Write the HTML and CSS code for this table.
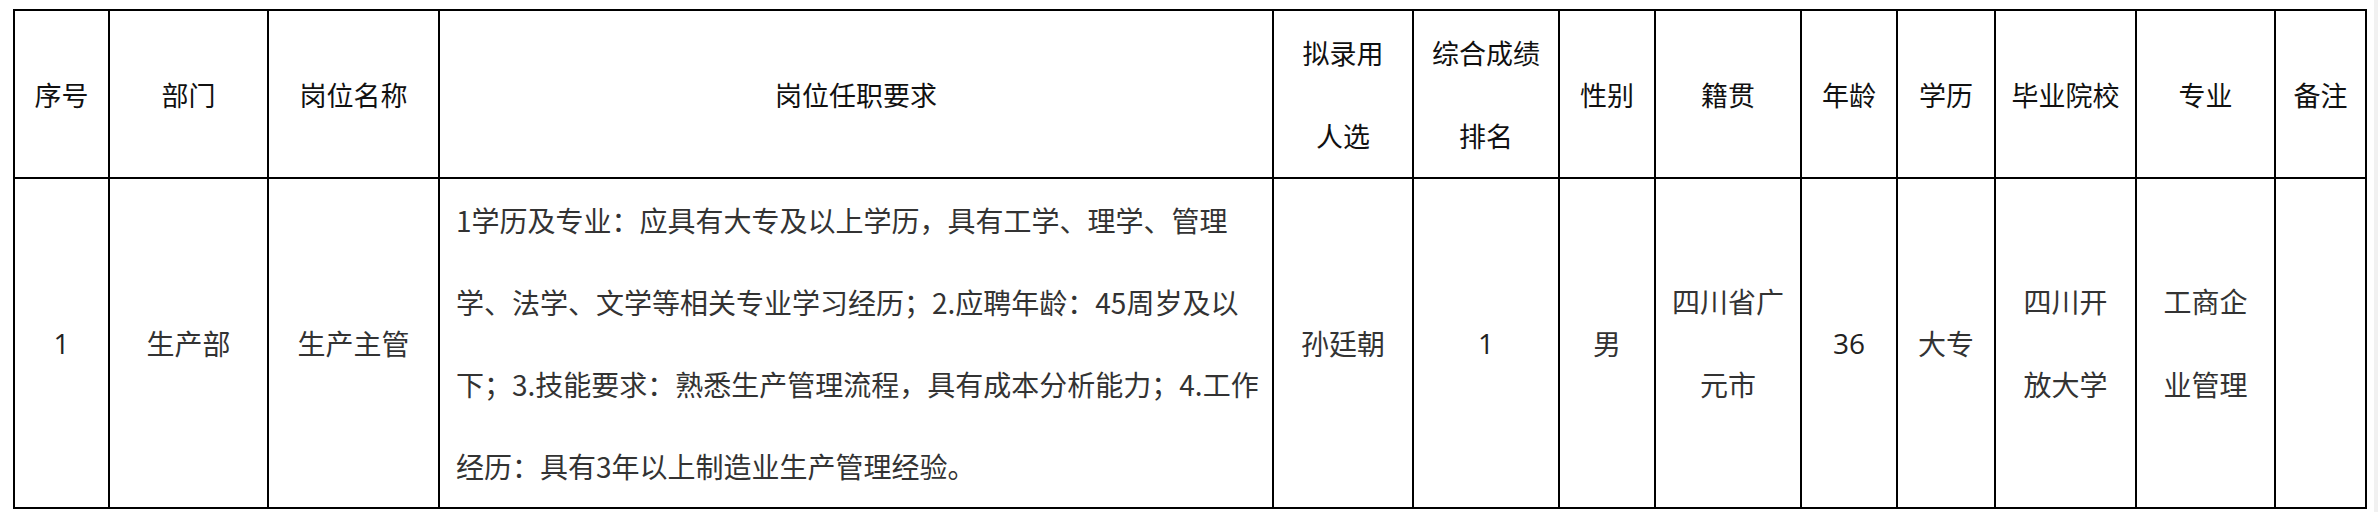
FILE: index.html
```html
<!DOCTYPE html>
<html lang="zh-CN">
<head>
<meta charset="utf-8">
<title>拟录用人员公示</title>
<link rel="stylesheet" href="styles.css">
</head>
<body>
<div class="page">
  <main class="content">
    <table class="roster">
      <colgroup>
        <col class="c-no">
        <col class="c-dept">
        <col class="c-post">
        <col class="c-req">
        <col class="c-name">
        <col class="c-rank">
        <col class="c-sex">
        <col class="c-origin">
        <col class="c-age">
        <col class="c-edu">
        <col class="c-school">
        <col class="c-major">
        <col class="c-note">
      </colgroup>
      <thead>
        <tr class="head-row">
          <th>序号</th>
          <th>部门</th>
          <th>岗位名称</th>
          <th>岗位任职要求</th>
          <th>拟录用<br>人选</th>
          <th>综合成绩<br>排名</th>
          <th>性别</th>
          <th>籍贯</th>
          <th>年龄</th>
          <th>学历</th>
          <th>毕业院校</th>
          <th>专业</th>
          <th>备注</th>
        </tr>
      </thead>
      <tbody>
        <tr class="body-row">
          <td class="num">1</td>
          <td>生产部</td>
          <td>生产主管</td>
          <td class="req">1学历及专业：应具有大专及以上学历，具有工学、理学、管理<br>学、法学、文学等相关专业学习经历；2.应聘年龄：45周岁及以<br>下；3.技能要求：熟悉生产管理流程，具有成本分析能力；4.工作<br>经历：具有3年以上制造业生产管理经验。</td>
          <td>孙廷朝</td>
          <td class="num">1</td>
          <td>男</td>
          <td>四川省广<br>元市</td>
          <td class="num">36</td>
          <td>大专</td>
          <td>四川开<br>放大学</td>
          <td>工商企<br>业管理</td>
          <td></td>
        </tr>
      </tbody>
    </table>
  </main>
  <aside class="scroll-track"></aside>
</div>
</body>
</html>
```

FILE: styles.css
```css
html, body {
  margin: 0;
  padding: 0;
  background: #ffffff;
}

.page {
  display: flex;
  min-height: 512px;
}

.content {
  flex: 1;
  padding: 9px 0 0 13px;
}

.scroll-track {
  width: 4px;
  background: #f1f1f1;
}

.roster {
  border-collapse: separate;
  border-spacing: 0;
  table-layout: fixed;
  width: 2354px;
  border-top: 2px solid #000;
  border-left: 2px solid #000;
  font-family: "Noto Sans CJK SC", "Noto Sans", sans-serif;
}

.roster th,
.roster td {
  border-right: 2px solid #000;
  border-bottom: 2px solid #000;
  padding: 0;
  text-align: center;
  vertical-align: middle;
  white-space: nowrap;
}

.c-no { width: 95px; }
.c-dept { width: 159px; }
.c-post { width: 171px; }
.c-req { width: 834px; }
.c-name { width: 140px; }
.c-rank { width: 146px; }
.c-sex { width: 96px; }
.c-origin { width: 146px; }
.c-age { width: 96px; }
.c-edu { width: 98px; }
.c-school { width: 141px; }
.c-major { width: 139px; }
.c-note { width: 91px; }

.head-row {
  height: 163px;
}

.head-row th {
  font-size: 27px;
  font-weight: 400;
  line-height: 83px;
  color: #111111;
}

.body-row {
  height: 330px;
}

.body-row td {
  font-size: 28px;
  line-height: 83px;
  color: #333333;
}

.body-row td.num {
  font-family: "Open Sans", "Noto Sans CJK SC", sans-serif;
  font-size: 28px;
  color: #222222;
}

.body-row td.req {
  text-align: left;
  padding-left: 16px;
  font-size: 28px;
  line-height: 82px;
}
```
